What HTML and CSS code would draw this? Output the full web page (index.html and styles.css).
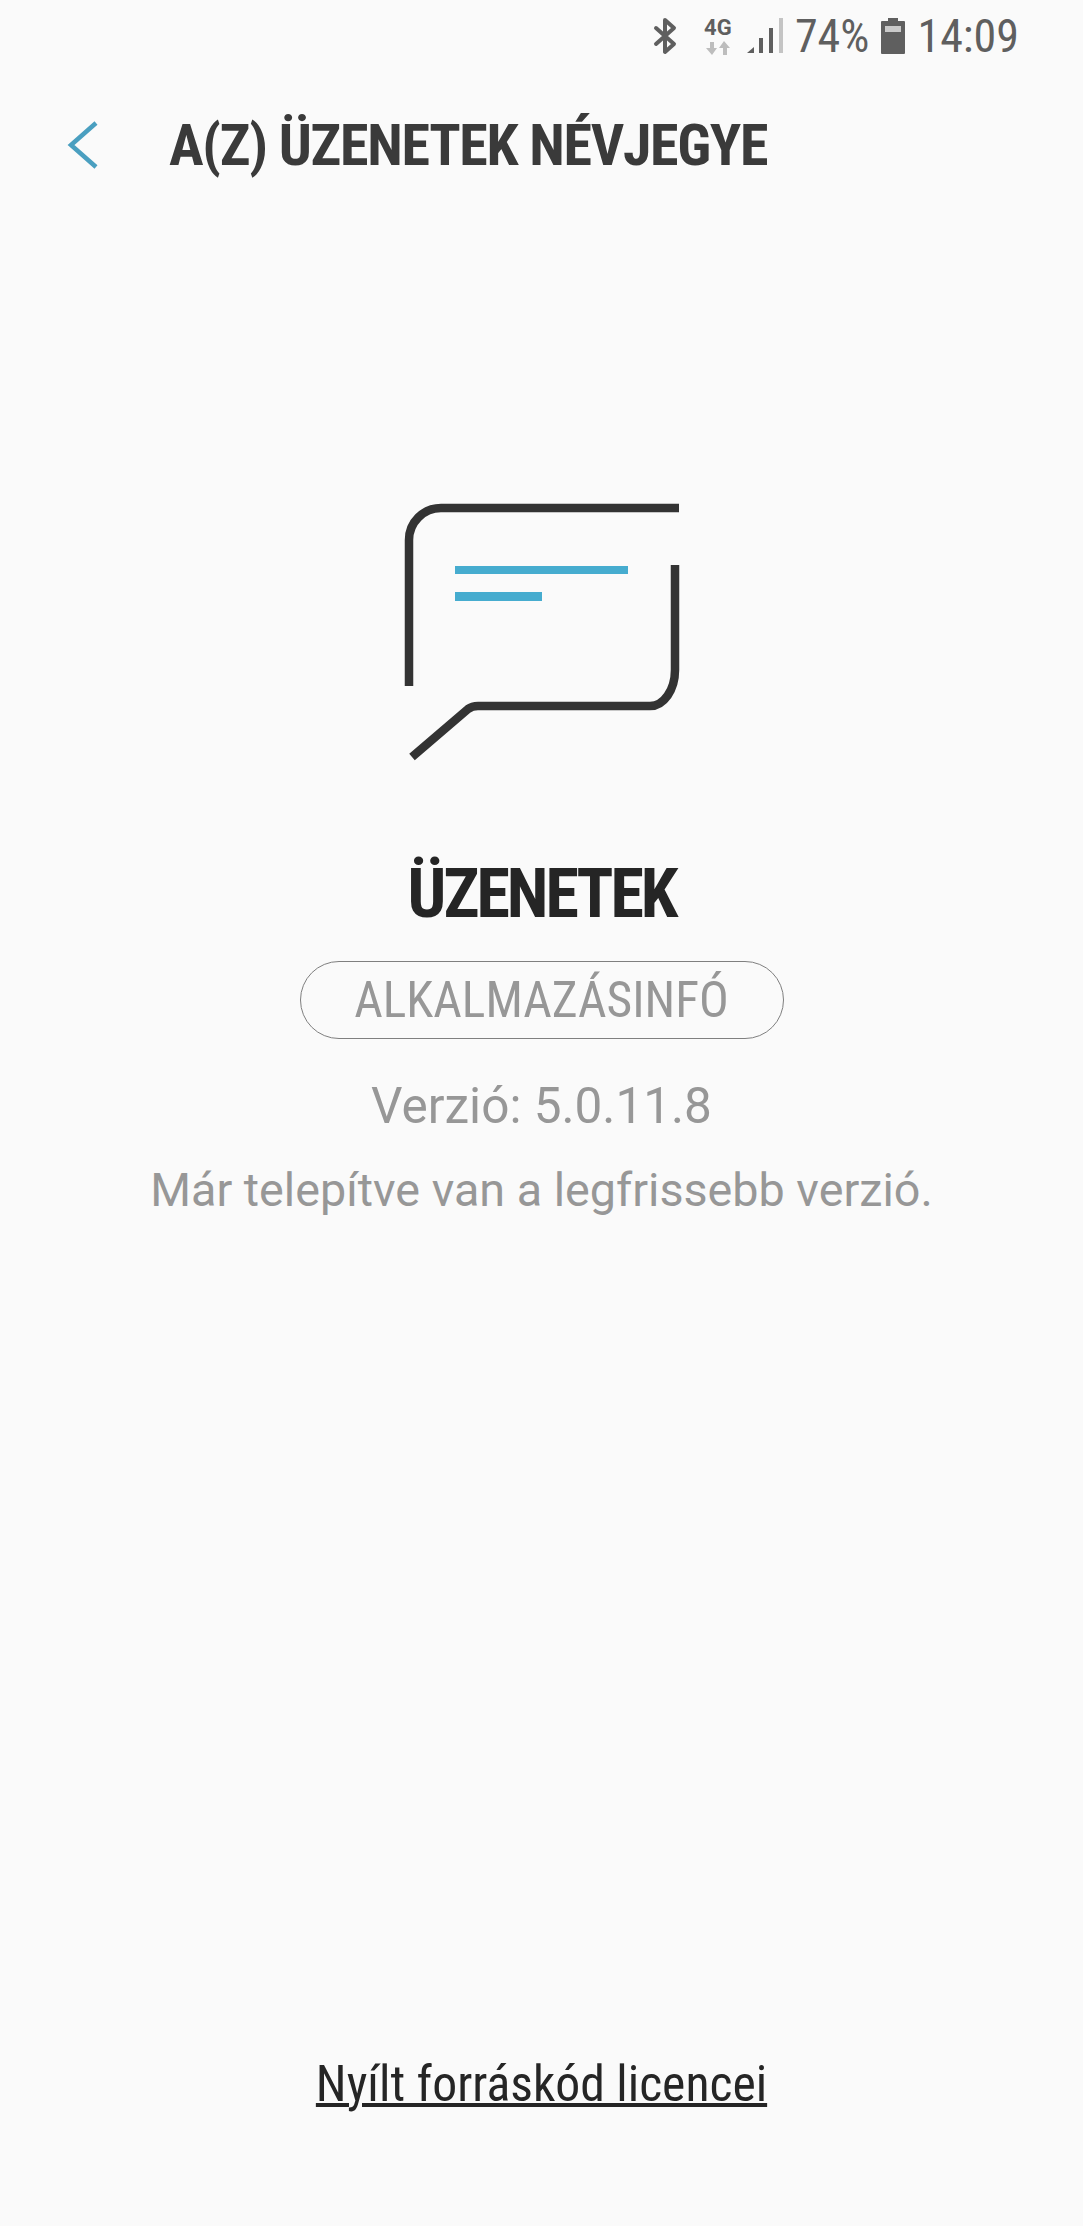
FILE: index.html
```html
<!DOCTYPE html>
<html lang="hu">
<head>
  <meta charset="UTF-8" />
  <title>A(z) Üzenetek névjegye</title>
  <link rel="stylesheet" href="styles.css">
</head>
<body>
  <div class="status-bar">
    <svg class="icon-bt" viewBox="0 0 24 38" width="24" height="38">
      <path d="M3 11 L21 27 L12 35 V3 L21 11 L3 27" fill="none" stroke="#5f5f5f" stroke-width="4" stroke-linecap="round" stroke-linejoin="round" />
    </svg>
    <div class="net">
      <span class="net-label">4G</span>
      <svg viewBox="0 0 24 14" width="24" height="14">
        <path d="M8 1 V7 H11 L6 14 L0 7 H4 V1 Z" fill="#bdbdbd" />
        <path d="M17 14 V7 H13 L18 0 L24 7 H21 V14 Z" fill="#bdbdbd" />
      </svg>
    </div>
    <svg class="icon-signal" viewBox="0 0 36 36" width="36" height="36">
      <path d="M0 35 L7 29 V35 Z" fill="#5f5f5f" />
      <rect x="12" y="20" width="4" height="15" fill="#5f5f5f" />
      <rect x="22" y="10" width="4" height="25" fill="#5f5f5f" />
      <rect x="32" y="0" width="4" height="35" fill="#c4c4c4" />
    </svg>
    <span class="status-text">74%</span>
    <svg class="icon-battery" viewBox="0 0 24 36" width="24" height="36">
      <path d="M7 0 H17 V3 H23 Q24 3 24 4 V35 Q24 36 23 36 H1 Q0 36 0 35 V4 Q0 3 1 3 H7 Z" fill="#5f5f5f" />
      <rect x="4" y="8" width="16" height="6" fill="#c9c9c9" />
    </svg>
    <span class="status-text">14:09</span>
  </div>

  <div class="header">
    <svg class="back" viewBox="0 0 32 50" width="32" height="50">
      <path d="M29 3 L4 25 L29 47" fill="none" stroke="#4a9fc0" stroke-width="4.5" />
    </svg>
    <h1 class="title">A(Z) ÜZENETEK NÉVJEGYE</h1>
  </div>

  <div class="content">
    <svg class="logo" viewBox="0 0 320 300" width="320" height="300">
      <path d="M29 206 V60 A32 32 0 0 1 61 28 H299" fill="none" stroke="#333" stroke-width="8.5" />
      <path d="M295 85 V190 A25 36 0 0 1 270 226 H98 Q92 226 88 229 L32 277" fill="none" stroke="#333" stroke-width="8.5" />
      <rect x="75" y="86" width="173" height="8" fill="#46accf" />
      <rect x="75" y="112" width="87" height="9" fill="#46accf" />
    </svg>
    <h2 class="app-name">ÜZENETEK</h2>
    <div class="pill"><span>ALKALMAZÁSINFÓ</span></div>
    <p class="version">Verzió: 5.0.11.8</p>
    <p class="latest">Már telepítve van a legfrissebb verzió.</p>
  </div>

  <div class="footer">
    <a class="license" href="#">Nyílt forráskód licencei</a>
  </div>
</body>
</html>
```

FILE: styles.css
```css
html, body {
  margin: 0;
  height: 100%;
}

body {
  width: 1083px;
  height: 2226px;
  display: flex;
  flex-direction: column;
  background-color: #fafafa;
  font-family: Roboto, "Noto Sans", sans-serif;
  overflow: hidden;
}

.status-bar {
  height: 72px;
  padding-right: 64px;
  display: flex;
  justify-content: flex-end;
  align-items: center;
  gap: 12px;
  color: #5f5f5f;
}

.icon-bt {
  margin-right: 15px;
}

.status-text {
  font-size: 46px;
  font-stretch: 75%;
}

.net {
  width: 28px;
  margin-right: 3px;
  display: flex;
  flex-direction: column;
  align-items: center;
  gap: 3px;
}

.net-label {
  font-size: 22px;
  font-weight: bold;
  line-height: 20px;
}

.header {
  height: 146px;
  display: flex;
  align-items: center;
  padding-left: 67px;
  gap: 70px;
}

.title {
  margin: 0;
  font-size: 58px;
  font-weight: bold;
  font-stretch: 75%;
  letter-spacing: -1.3px;
  color: #3a3a3a;
}

.content {
  padding-top: 262px;
  display: flex;
  flex-direction: column;
  align-items: center;
}

.logo {
  margin-right: 3px;
}

.app-name {
  margin: 74px 0 0;
  font-size: 68px;
  font-weight: bold;
  font-stretch: 75%;
  letter-spacing: -3px;
  color: #252525;
}

.pill {
  width: 482px;
  height: 76px;
  margin-top: 27px;
  display: flex;
  justify-content: center;
  align-items: center;
  border: 1px solid #7f7f7f;
  border-radius: 39px;
  font-size: 49.5px;
  font-stretch: 75%;
  color: #979797;
}

.version {
  margin: 38px 0 0;
  font-size: 49.5px;
  color: #979797;
}

.latest {
  margin: 28px 0 0;
  font-size: 46.7px;
  color: #979797;
}

.footer {
  margin-top: auto;
  padding-bottom: 113px;
  text-align: center;
}

.license {
  font-size: 49.7px;
  font-stretch: 75%;
  color: #252525;
  text-decoration: underline;
  text-decoration-thickness: 4px;
}
```
